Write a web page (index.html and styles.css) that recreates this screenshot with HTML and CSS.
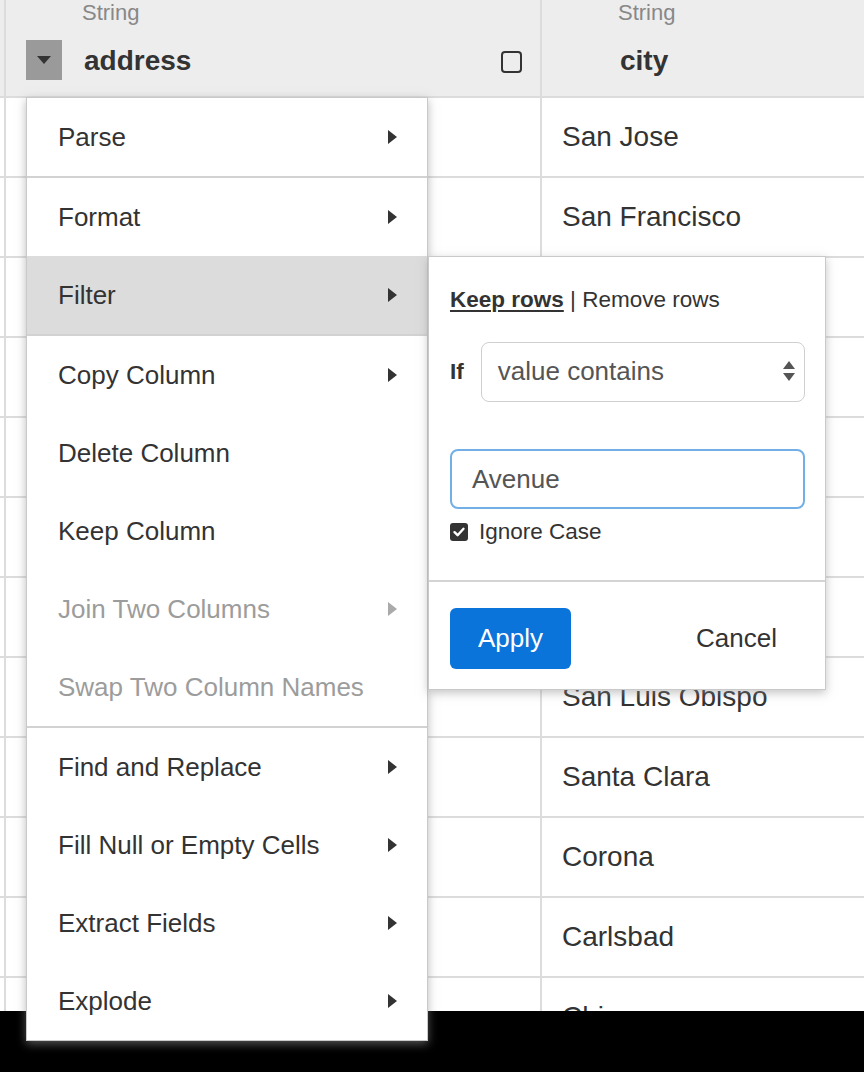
FILE: index.html
```html
<!DOCTYPE html>
<html lang="en">
<head>
<meta charset="utf-8">
<title>Column menu</title>
<link rel="stylesheet" href="styles.css">
</head>
<body>
<div class="screen">
  <div class="table">
    <div class="row header-row">
      <div class="cell gutter"></div>
      <div class="cell head">
        <span class="head-type">String</span>
        <span class="col-menu-btn"><svg width="14" height="8" viewBox="0 0 14 8"><path d="M0 0H14L7 8Z" fill="#333"/></svg></span>
        <span class="head-name">address</span>
        <span class="head-check"></span>
      </div>
      <div class="cell head">
        <span class="head-type">String</span>
        <span class="head-name">city</span>
      </div>
    </div>
    <div class="row"><div class="cell gutter"></div><div class="cell"></div><div class="cell val">San Jose</div></div>
    <div class="row"><div class="cell gutter"></div><div class="cell"></div><div class="cell val">San Francisco</div></div>
    <div class="row"><div class="cell gutter"></div><div class="cell"></div><div class="cell val"></div></div>
    <div class="row"><div class="cell gutter"></div><div class="cell"></div><div class="cell val"></div></div>
    <div class="row"><div class="cell gutter"></div><div class="cell"></div><div class="cell val"></div></div>
    <div class="row"><div class="cell gutter"></div><div class="cell"></div><div class="cell val"></div></div>
    <div class="row"><div class="cell gutter"></div><div class="cell"></div><div class="cell val"></div></div>
    <div class="row"><div class="cell gutter"></div><div class="cell"></div><div class="cell val">San Luis Obispo</div></div>
    <div class="row"><div class="cell gutter"></div><div class="cell"></div><div class="cell val">Santa Clara</div></div>
    <div class="row"><div class="cell gutter"></div><div class="cell"></div><div class="cell val">Corona</div></div>
    <div class="row"><div class="cell gutter"></div><div class="cell"></div><div class="cell val">Carlsbad</div></div>
    <div class="row"><div class="cell gutter"></div><div class="cell"></div><div class="cell val">Chino</div></div>
  </div>
  <div class="black-bar"></div>

  <ul class="col-menu">
    <li class="menu-item">Parse<span class="caret"></span></li>
    <li class="menu-sep"></li>
    <li class="menu-item">Format<span class="caret"></span></li>
    <li class="menu-item active">Filter<span class="caret"></span></li>
    <li class="menu-sep"></li>
    <li class="menu-item">Copy Column<span class="caret"></span></li>
    <li class="menu-item">Delete Column</li>
    <li class="menu-item">Keep Column</li>
    <li class="menu-item disabled">Join Two Columns<span class="caret"></span></li>
    <li class="menu-item disabled">Swap Two Column Names</li>
    <li class="menu-sep"></li>
    <li class="menu-item">Find and Replace<span class="caret"></span></li>
    <li class="menu-item">Fill Null or Empty Cells<span class="caret"></span></li>
    <li class="menu-item">Extract Fields<span class="caret"></span></li>
    <li class="menu-item">Explode<span class="caret"></span></li>
  </ul>

  <div class="filter-panel">
    <div class="fp-body">
      <div class="fp-mode"><span class="on">Keep rows</span> | Remove rows</div>
      <div class="fp-cond">
        <span class="fp-if">If</span>
        <div class="fp-select">
          <span>value contains</span>
          <svg width="14" height="24" viewBox="0 0 14 24"><path d="M1 10L7 2L13 10Z" fill="#555"/><path d="M1 14L7 22L13 14Z" fill="#555"/></svg>
        </div>
      </div>
      <div class="fp-input">Avenue</div>
      <label class="fp-check">
        <span class="checkbox"><svg width="14" height="14" viewBox="0 0 14 14"><path d="M2.5 7.2L5.6 10.2L11.5 3.8" fill="none" stroke="#fff" stroke-width="2.4" stroke-linecap="round" stroke-linejoin="round"/></svg></span>
        Ignore Case
      </label>
    </div>
    <div class="fp-footer">
      <button class="btn-apply">Apply</button>
      <button class="btn-cancel">Cancel</button>
    </div>
  </div>
</div>
</body>
</html>
```

FILE: styles.css
```css
* { box-sizing: border-box; }
html, body { margin: 0; padding: 0; }
body {
  font-family: "Liberation Sans", Arial, sans-serif;
  background: #000;
}
.screen {
  position: relative;
  width: 864px;
  height: 1072px;
  overflow: hidden;
  background: #000;
}
.table {
  height: 1011px;
  overflow: hidden;
  background: #fff;
}
.row {
  display: grid;
  grid-template-columns: 6px 536px 1fr;
  height: 80px;
  border-bottom: 2px solid #dcdcdc;
}
.row > .cell { border-right: 2px solid #dcdcdc; }
.row > .cell:last-child { border-right: none; }
.header-row {
  height: 98px;
  background: #ededed;
}
.head {
  display: grid;
  grid-template-columns: 58px 1fr auto;
  grid-template-rows: 26px 40px;
  row-gap: 14px;
  padding: 0 18px 0 20px;
  align-items: center;
}
.head-type {
  grid-column: 2;
  grid-row: 1;
  font-size: 22px;
  line-height: 26px;
  color: #888;
  margin-left: -2px;
}
.col-menu-btn {
  grid-column: 1;
  grid-row: 2;
  width: 36px;
  height: 40px;
  background: #9a9a9a;
  display: flex;
  align-items: center;
  justify-content: center;
}
.head-name {
  grid-column: 2;
  grid-row: 2;
  font-size: 28px;
  font-weight: bold;
  line-height: 40px;
  color: #333;
  padding-top: 2px;
}
.head-check {
  grid-column: 3;
  grid-row: 2;
  width: 21px;
  height: 22px;
  border: 2px solid #333;
  border-radius: 4px;
  margin-top: 4px;
}
.val {
  padding-left: 20px;
  font-size: 28px;
  line-height: 78px;
  color: #333;
  white-space: nowrap;
}
.black-bar {
  height: 61px;
  background: #000;
}

/* column menu */
.col-menu {
  position: absolute;
  left: 26px;
  top: 97px;
  width: 402px;
  margin: 0;
  padding: 0;
  list-style: none;
  background: #fff;
  border: 1px solid #c9c9c9;
  box-shadow: 0 3px 9px rgba(140, 140, 140, 0.6);
}
.menu-item {
  height: 78px;
  display: flex;
  align-items: center;
  justify-content: space-between;
  padding: 0 30px 0 31px;
  font-size: 26px;
  color: #333;
  white-space: nowrap;
}
.menu-item.active { background: #dcdcdc; }
.menu-item.disabled { color: #9c9c9c; }
.menu-item.disabled .caret { border-left-color: #aaa; }
.menu-sep {
  height: 2px;
  background: #d2d2d2;
}
.caret {
  width: 0;
  height: 0;
  border-left: 9px solid #333;
  border-top: 7px solid transparent;
  border-bottom: 7px solid transparent;
}

/* filter submenu */
.filter-panel {
  position: absolute;
  left: 428px;
  top: 256px;
  width: 398px;
  height: 434px;
  background: #fff;
  border: 1px solid #c9c9c9;
  box-shadow: 0 3px 9px rgba(140, 140, 140, 0.5);
}
.fp-body {
  padding: 30px 20px 36px 21px;
}
.fp-mode {
  font-size: 22.5px;
  line-height: 26px;
  color: #333;
}
.fp-mode .on {
  font-weight: bold;
  text-decoration: underline;
  text-underline-offset: 3px;
}
.fp-cond {
  display: flex;
  align-items: center;
  gap: 17px;
  margin-top: 29px;
}
.fp-if {
  font-size: 22.5px;
  font-weight: bold;
  color: #333;
}
.fp-select {
  flex: 1;
  height: 60px;
  border: 1px solid #cfcfcf;
  border-radius: 8px;
  display: flex;
  align-items: center;
  justify-content: space-between;
  padding: 0 8px 2px 16px;
  font-size: 26px;
  color: #555;
}
.fp-input {
  margin-top: 47px;
  height: 60px;
  border: 2px solid #72afe6;
  border-radius: 8px;
  padding-left: 20px;
  display: flex;
  align-items: center;
  font-size: 26px;
  color: #555;
}
.fp-check {
  display: flex;
  align-items: center;
  gap: 11px;
  margin-top: 11px;
  height: 24px;
  font-size: 22.5px;
  color: #333;
}
.checkbox {
  width: 18px;
  height: 18px;
  border-radius: 3px;
  background: #333;
  display: flex;
  align-items: center;
  justify-content: center;
}
.fp-footer {
  border-top: 2px solid #d4d4d4;
  padding: 26px 48px 20px 21px;
  display: flex;
  justify-content: space-between;
  align-items: center;
}
.btn-apply {
  width: 121px;
  height: 61px;
  border: none;
  border-radius: 6px;
  background: #0a74da;
  color: #fff;
  font-family: inherit;
  font-size: 26px;
  padding: 0;
}
.btn-cancel {
  border: none;
  background: none;
  color: #333;
  font-family: inherit;
  font-size: 26px;
  padding: 0;
}
```
